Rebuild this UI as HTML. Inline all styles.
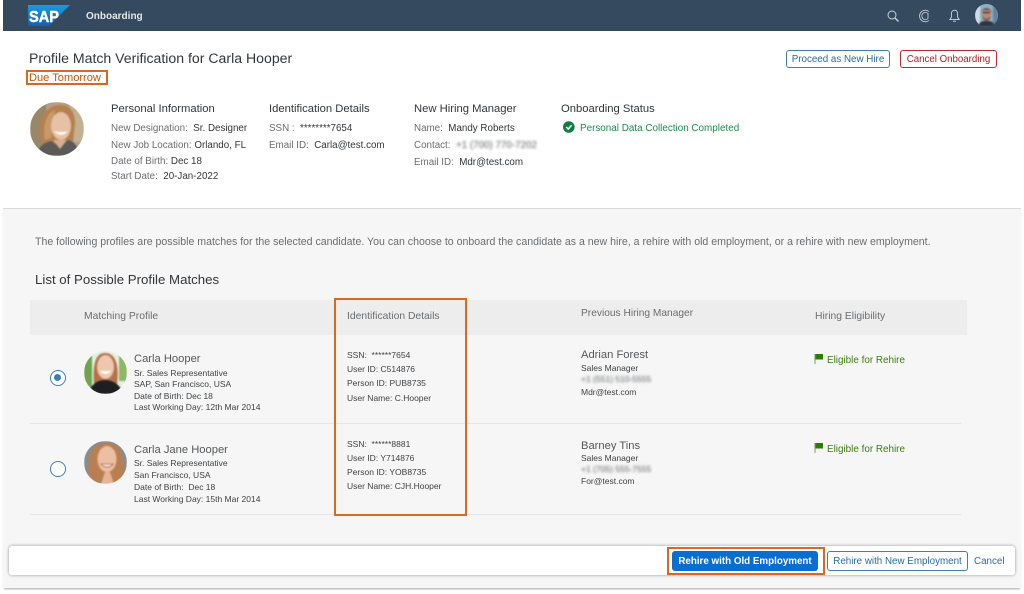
<!DOCTYPE html>
<html><head><meta charset="utf-8"><style>
html,body{margin:0;padding:0;width:1024px;height:594px;overflow:hidden;background:#fff}
body{position:relative;font-family:"Liberation Sans",sans-serif;color:#32363a}
#w{position:absolute;left:0;top:0;width:1024px;height:594px;filter:blur(.35px);overflow:hidden}
.a{position:absolute}
.t{position:absolute;white-space:pre;line-height:14px;font-size:9.8px;color:#32363a}
.g{color:#6a6d70}
.h{font-size:11.25px;color:#32363a}
.s{font-size:8.5px;color:#3f4245}
.n{font-size:11.2px;color:#55585b}
.th{font-size:10.35px;color:#6a6d70}
.blur{filter:blur(1.2px);color:#606366}
.o{position:absolute;border:2px solid #d9691f;box-sizing:border-box}
.btn{position:absolute;box-sizing:border-box;border-radius:3px;text-align:center;font-size:9.8px;white-space:pre;background:#fff}
.av{position:absolute;border-radius:50%;overflow:hidden}
.av svg{filter:blur(.7px);display:block}
</style></head><body><div id="w">
<div class="a" style="left:3px;top:0;width:1018px;height:31px;background:#354a5f"></div>
<div class="a" style="left:3px;top:31px;width:1018px;height:178px;background:#fff;border-bottom:1px solid #d9d9d9;box-sizing:border-box"></div>
<div class="a" style="left:3px;top:209px;width:1018px;height:379px;background:#f6f6f6;box-shadow:0 2px 2px -1px rgba(0,0,0,.35)"></div>

<svg class="a" style="left:28px;top:5px" width="43" height="21" viewBox="0 0 43 21"><defs><linearGradient id="sg" x1="0" y1="0" x2="0" y2="1"><stop offset="0" stop-color="#1a9be0"/><stop offset="1" stop-color="#1560b0"/></linearGradient></defs><polygon points="0,0 42,0 21,21 0,21" fill="url(#sg)"/><text x="1" y="17" font-family="Liberation Sans" font-weight="700" font-size="16" fill="#fff" stroke="#fff" stroke-width=".5" textLength="30" lengthAdjust="spacingAndGlyphs">SAP</text></svg>
<div class="t" style="left:86px;top:10px;font-size:10px;font-weight:700;color:#e3e7ea">Onboarding</div>

<svg class="a" style="left:886px;top:9px" width="14" height="14" viewBox="0 0 14 14" fill="none" stroke="#cfd6dc" stroke-width=".9"><circle cx="6" cy="6" r="4"/><path d="M9 9l3.500 3.500" stroke-width="1.300"/></svg>
<svg class="a" style="left:917px;top:8px" width="15" height="16" viewBox="0 0 15 16" fill="none" stroke="#cfd6dc" stroke-width=".8"><path d="M12 3.500A5.800 5.800 0 1 0 12 12.500"/><path d="M11 5.500A3.600 3.600 0 1 0 11 10.500"/><path d="M11 5v5.500"/></svg>
<svg class="a" style="left:947px;top:8px" width="15" height="16" viewBox="0 0 15 16" fill="none" stroke="#cfd6dc" stroke-width=".9"><path d="M7.500 2.200C5.200 2.200 4.400 4 4.400 6v3.200L2.800 11.600h9.400L10.600 9.200V6c0-2-.8-3.800-3.100-3.800zM6 13.200h3"/></svg>
<div class="av" style="left:975px;top:4px;width:23px;height:23px;background:#7ea3bd"><svg width="23" height="23" viewBox="0 0 23 23"><rect width="23" height="23" fill="#8fb0c6"/><rect width="5" height="23" fill="#d0dde6"/><rect x="18" width="5" height="23" fill="#5d86a5"/><ellipse cx="11.500" cy="10" rx="5" ry="6.500" fill="#b98a72"/><path d="M6.500 8C7 3 16 3 16.500 8L15 6H8z" fill="#5a5550"/><path d="M8 8.500h7" stroke="#333" stroke-width="1.200"/><path d="M8 12c1 4 6 4 7 0v3l-3.500 2-3.500-2z" fill="#6b4a3b"/><path d="M3 23c1-6 5-6 8.500-6S19 17 20 23z" fill="#2f363d"/></svg></div>

<div class="t" style="left:29px;top:50px;font-size:14.1px;line-height:16px">Profile Match Verification for Carla Hooper</div>
<div class="t" style="left:29px;top:71px;font-size:11.1px;color:#c35500">Due Tomorrow</div>
<div class="o" style="left:26px;top:70px;width:82px;height:15px"></div>

<div class="btn" style="left:786px;top:50px;width:104px;height:18px;border:1px solid #3f7fb0;color:#2a6a9e;line-height:17px">Proceed as New Hire</div>
<div class="btn" style="left:900px;top:50px;width:97px;height:18px;border:1px solid #bb2a2a;color:#a82020;line-height:17px;font-size:9.7px">Cancel Onboarding</div>

<div class="av" style="left:30px;top:102px;width:54px;height:54px"><svg width="54" height="54" viewBox="0 0 54 54"><rect width="54" height="54" fill="#b3a083"/><rect width="16" height="54" fill="#9a8669"/><rect x="40" width="14" height="40" fill="#c2b294"/><path d="M11 40C6 22 14 3 30 3c14 0 17 14 14 26l-1 15H17z" fill="#b4814f"/><path d="M15 38C12 24 17 10 25 8l-4 28z" fill="#c89a68"/><ellipse cx="31" cy="24" rx="10" ry="14" fill="#e8c0a6"/><path d="M24 29c3 5 11 5 14 0-4 1.500-10 1.500-14 0z" fill="#fff"/><path d="M7 54c1-10 8-14 15-15 3 5 12 5 15-1 6 1 11 4 12 16z" fill="#5b5a57"/><path d="M23 38l7 9 7-9z" fill="#d9ad94"/></svg></div>

<div class="t h" style="left:111px;top:102px">Personal Information</div>
<div class="t" style="left:111px;top:122px"><span class="g">New Designation:</span>  Sr. Designer</div>
<div class="t" style="left:111px;top:139px"><span class="g">New Job Location:</span> Orlando, FL</div>
<div class="t" style="left:111px;top:155px"><span class="g">Date of Birth:</span> Dec 18</div>
<div class="t" style="left:111px;top:170px"><span class="g">Start Date:</span>  20-Jan-2022</div>

<div class="t h" style="left:269px;top:102px">Identification Details</div>
<div class="t" style="left:269px;top:122px"><span class="g">SSN :</span>  ********7654</div>
<div class="t" style="left:269px;top:139px"><span class="g">Email ID:</span>  Carla@test.com</div>

<div class="t h" style="left:414px;top:102px">New Hiring Manager</div>
<div class="t" style="left:414px;top:122px"><span class="g">Name:</span>  Mandy Roberts</div>
<div class="t" style="left:414px;top:139px"><span class="g">Contact:</span></div>
<div class="t blur" style="left:456px;top:139px">+1 (700) 770-7202</div>
<div class="t" style="left:414px;top:156px"><span class="g">Email ID:</span>  Mdr@test.com</div>

<div class="t h" style="left:561px;top:102px">Onboarding Status</div>
<svg class="a" style="left:562px;top:120px" width="14" height="14" viewBox="0 0 14 14"><circle cx="6.800" cy="7" r="5.800" fill="#107e3e"/><path d="M4.200 7l2 2 3.400-3.800" fill="none" stroke="#fff" stroke-width="1.500"/></svg>
<div class="t" style="left:580px;top:122px;font-size:9.9px;color:#1d8a4c">Personal Data Collection Completed</div>

<div class="t" style="left:35px;top:235px;font-size:10.58px;color:#6a6d70">The following profiles are possible matches for the selected candidate. You can choose to onboard the candidate as a new hire, a rehire with old employment, or a rehire with new employment.</div>
<div class="t" style="left:35px;top:272px;font-size:13.25px;line-height:16px">List of Possible Profile Matches</div>

<div class="a" style="left:30px;top:300px;width:937px;height:35px;background:#ededed"></div>
<div class="a" style="left:30px;top:423px;width:931px;height:1px;background:#e5e5e5"></div>
<div class="a" style="left:30px;top:514px;width:931px;height:1px;background:#e5e5e5"></div>
<div class="t th" style="left:84px;top:310px">Matching Profile</div>
<div class="t th" style="left:347px;top:310px">Identification Details</div>
<div class="t th" style="left:581px;top:307px;font-size:10.2px">Previous Hiring Manager</div>
<div class="t th" style="left:815px;top:310px">Hiring Eligibility</div>

<div class="a" style="left:50px;top:370px;width:16px;height:16px;box-sizing:border-box;border:1.500px solid #3f7fb0;border-radius:50%;background:#fff"><div class="a" style="left:3px;top:3px;width:7px;height:7px;border-radius:50%;background:#3f7fb0"></div></div>
<div class="a" style="left:50px;top:461px;width:16px;height:16px;box-sizing:border-box;border:1.500px solid #3f7fb0;border-radius:50%;background:#fff"></div>

<div class="av" style="left:84px;top:351px;width:43px;height:43px"><svg width="43" height="43" viewBox="0 0 43 43"><rect width="43" height="43" fill="#e6efe0"/><rect width="8" height="43" fill="#6fa34c"/><rect x="35" width="8" height="30" fill="#8ab868"/><path d="M10 34C8 10 13 2 21 2s15 7 12 32z" fill="#b5714c"/><ellipse cx="21.500" cy="16" rx="8.500" ry="12" fill="#efc7ae"/><path d="M16 20c3 4 8 4 11 0z" fill="#fff"/><path d="M5 43c1-9 8-14 16-14s16 5 18 14z" fill="#1f1f22"/></svg></div>
<div class="av" style="left:84px;top:441px;width:43px;height:43px"><svg width="43" height="43" viewBox="0 0 43 43"><rect width="43" height="43" fill="#8b8b8b"/><path d="M5 42C2 14 9 2 22 2s20 13 16 40z" fill="#b97f50"/><ellipse cx="23" cy="18" rx="9.500" ry="13" fill="#ecbfa2"/><path d="M17 23c3 4 9 4 12 0z" fill="#f6ece8" stroke="#b75a50" stroke-width=".8"/><path d="M17 43l4-12h5l4 12z" fill="#e6b497"/></svg></div>

<div class="t n" style="left:134px;top:352px">Carla Hooper</div>
<div class="t s" style="left:134px;top:366px">Sr. Sales Representative</div>
<div class="t s" style="left:134px;top:377px">SAP, San Francisco, USA</div>
<div class="t s" style="left:134px;top:389px">Date of Birth: Dec 18</div>
<div class="t s" style="left:134px;top:400px">Last Working Day: 12th Mar 2014</div>

<div class="t n" style="left:134px;top:443px">Carla Jane Hooper</div>
<div class="t s" style="left:134px;top:456px">Sr. Sales Representative</div>
<div class="t s" style="left:134px;top:468px">San Francisco, USA</div>
<div class="t s" style="left:134px;top:480px">Date of Birth:  Dec 18</div>
<div class="t s" style="left:134px;top:492px">Last Working Day: 15th Mar 2014</div>

<div class="t s" style="left:347px;top:348px">SSN:  ******7654</div>
<div class="t s" style="left:347px;top:362px">User ID: C514876</div>
<div class="t s" style="left:347px;top:376px">Person ID: PUB8735</div>
<div class="t s" style="left:347px;top:391px">User Name: C.Hooper</div>
<div class="t s" style="left:347px;top:437px">SSN:  ******8881</div>
<div class="t s" style="left:347px;top:451px">User ID: Y714876</div>
<div class="t s" style="left:347px;top:465px">Person ID: YOB8735</div>
<div class="t s" style="left:347px;top:479px">User Name: CJH.Hooper</div>

<div class="t n" style="left:581px;top:348px">Adrian Forest</div>
<div class="t s" style="left:581px;top:361px">Sales Manager</div>
<div class="t s blur" style="left:581px;top:372px">+1 (551) 510-5555</div>
<div class="t s" style="left:581px;top:385px">Mdr@test.com</div>
<div class="t n" style="left:581px;top:439px">Barney Tins</div>
<div class="t s" style="left:581px;top:451px">Sales Manager</div>
<div class="t s blur" style="left:581px;top:462px">+1 (705) 555-7555</div>
<div class="t s" style="left:581px;top:474px">For@test.com</div>

<svg class="a" style="left:814px;top:353px" width="10" height="11" viewBox="0 0 10 11"><rect x="0.500" y="1" width="1" height="10" fill="#7d9c5e"/><rect x="1.500" y="1" width="7.500" height="5.500" fill="#2b7c00"/></svg>
<div class="t" style="left:827px;top:354px;font-size:9.900px;color:#3f7a14">Eligible for Rehire</div>
<svg class="a" style="left:814px;top:442px" width="10" height="11" viewBox="0 0 10 11"><rect x="0.500" y="1" width="1" height="10" fill="#7d9c5e"/><rect x="1.500" y="1" width="7.500" height="5.500" fill="#2b7c00"/></svg>
<div class="t" style="left:827px;top:443px;font-size:9.900px;color:#3f7a14">Eligible for Rehire</div>

<div class="o" style="left:334px;top:298px;width:133px;height:218px"></div>

<div class="a" style="left:9px;top:546px;width:1006px;height:29px;background:#fff;border-radius:3px;box-shadow:0 0 3px rgba(0,0,0,.4)"></div>
<div class="btn" style="left:672px;top:551px;width:146px;height:20px;background:#0a6ed1;color:#fff;font-weight:700;line-height:21px;font-size:9.800px">Rehire with Old Employment</div>
<div class="o" style="left:667px;top:547px;width:158px;height:28px"></div>
<div class="btn" style="left:827px;top:551px;width:141px;height:20px;border:1px solid #3f7fb0;color:#2a6a9e;line-height:19px;font-size:9.800px">Rehire with New Employment</div>
<div class="t" style="left:974px;top:555px;color:#2a6a9e">Cancel</div>
</div></body></html>
